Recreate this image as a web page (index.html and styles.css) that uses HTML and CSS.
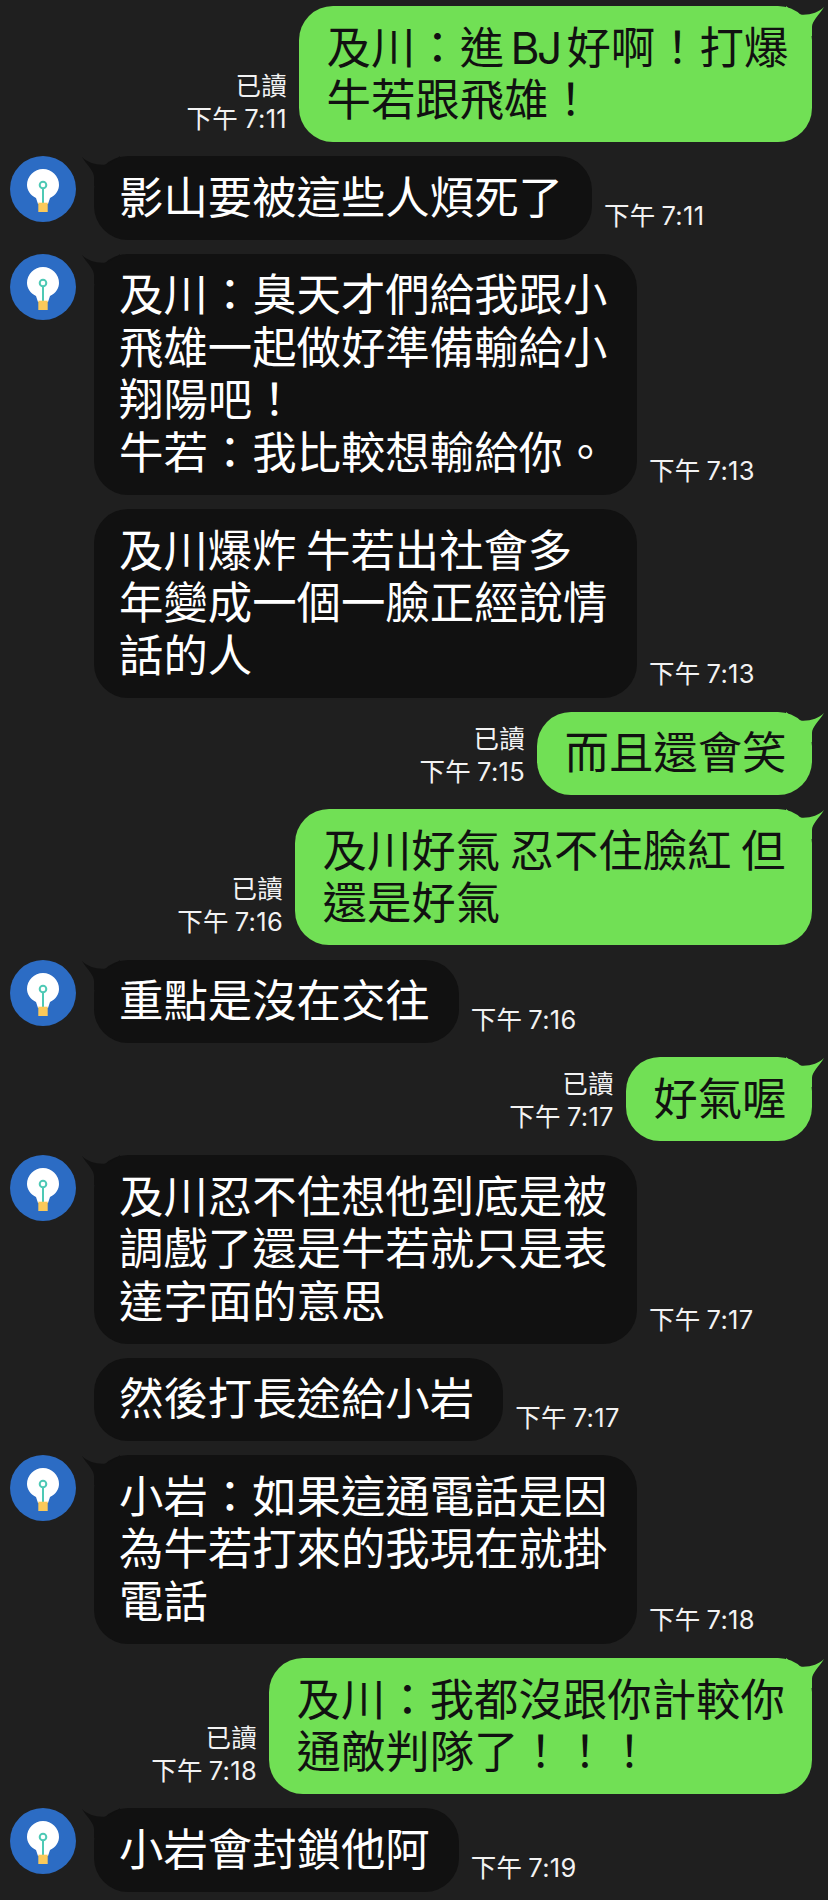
FILE: index.html
```html
<!DOCTYPE html>
<html lang="zh-Hant">
<head>
    <meta charset="UTF-8">
    <title>聊天記錄</title>
    <meta name="viewport" content="width=device-width, initial-scale=1.0">
    <link rel="stylesheet" href="styles.css">
</head>
<body>

<svg class="defs" width="0" height="0" aria-hidden="true">
    <symbol id="avatar" viewBox="0 0 66 66">
        <circle cx="33" cy="33" r="33" fill="#2c6cc4"/>
        <path d="M26 42C20 39 17 34 17 29a16 16 0 0 1 32 0C49 34 46 39 40 42L38 48H28Z" fill="#fff"/>
        <rect x="32" y="32" width="2" height="16" fill="#4ec9b5"/>
        <circle cx="33" cy="29" r="3.3" fill="#fff" stroke="#4ec9b5" stroke-width="2"/>
        <rect x="28.3" y="46.7" width="9.4" height="9.3" fill="#fbc95a"/>
    </symbol>
    <symbol id="tail" viewBox="0 0 40 30">
        <path d="M0 1C5 6 13 9 22 8.7C28 8 33 4 38 0V30H12V21C12 15 5 9 0 1Z"/>
    </symbol>
</svg>

<div class="chat">

    <div class="row me">
        <div class="meta"><span>已讀</span><span>下午 7:11</span></div>
        <div class="bubble w513"><svg class="tail"><use href="#tail"/></svg>及川：進<span class="bj"> BJ </span>好啊！打爆<br>牛若跟飛雄！</div>
    </div>

    <div class="row">
        <svg class="avatar"><use href="#avatar"/></svg>
        <div class="bubble"><svg class="tail"><use href="#tail"/></svg>影山要被這些人煩死了</div>
        <div class="meta"><span>下午 7:11</span></div>
    </div>

    <div class="row">
        <svg class="avatar"><use href="#avatar"/></svg>
        <div class="bubble wide"><svg class="tail"><use href="#tail"/></svg>及川：臭天才們給我跟小<br>飛雄一起做好準備輸給小<br>翔陽吧！<br>牛若：我比較想輸給你。</div>
        <div class="meta"><span>下午 7:13</span></div>
    </div>

    <div class="row next">
        <div class="bubble wide">及川爆炸 牛若出社會多<br>年變成一個一臉正經說情<br>話的人</div>
        <div class="meta"><span>下午 7:13</span></div>
    </div>

    <div class="row me">
        <div class="meta"><span>已讀</span><span>下午 7:15</span></div>
        <div class="bubble"><svg class="tail"><use href="#tail"/></svg>而且還會笑</div>
    </div>

    <div class="row me">
        <div class="meta"><span>已讀</span><span>下午 7:16</span></div>
        <div class="bubble w517"><svg class="tail"><use href="#tail"/></svg>及川好氣 忍不住臉紅 但<br>還是好氣</div>
    </div>

    <div class="row">
        <svg class="avatar"><use href="#avatar"/></svg>
        <div class="bubble"><svg class="tail"><use href="#tail"/></svg>重點是沒在交往</div>
        <div class="meta"><span>下午 7:16</span></div>
    </div>

    <div class="row me">
        <div class="meta"><span>已讀</span><span>下午 7:17</span></div>
        <div class="bubble"><svg class="tail"><use href="#tail"/></svg>好氣喔</div>
    </div>

    <div class="row">
        <svg class="avatar"><use href="#avatar"/></svg>
        <div class="bubble wide"><svg class="tail"><use href="#tail"/></svg>及川忍不住想他到底是被<br>調戲了還是牛若就只是表<br>達字面的意思</div>
        <div class="meta"><span>下午 7:17</span></div>
    </div>

    <div class="row next">
        <div class="bubble">然後打長途給小岩</div>
        <div class="meta"><span>下午 7:17</span></div>
    </div>

    <div class="row">
        <svg class="avatar"><use href="#avatar"/></svg>
        <div class="bubble wide"><svg class="tail"><use href="#tail"/></svg>小岩：如果這通電話是因<br>為牛若打來的我現在就掛<br>電話</div>
        <div class="meta"><span>下午 7:18</span></div>
    </div>

    <div class="row me">
        <div class="meta"><span>已讀</span><span>下午 7:18</span></div>
        <div class="bubble wide"><svg class="tail"><use href="#tail"/></svg>及川：我都沒跟你計較你<br>通敵判隊了！！！</div>
    </div>

    <div class="row">
        <svg class="avatar"><use href="#avatar"/></svg>
        <div class="bubble"><svg class="tail"><use href="#tail"/></svg>小岩會封鎖他阿</div>
        <div class="meta"><span>下午 7:19</span></div>
    </div>

</div>

</body>
</html>
```

FILE: styles.css
```css
body {
    margin: 0;
    background-color: #1f1f1f;
    font-family: Inter, "Noto Sans CJK TC", sans-serif;
    color: #fff;
}
.defs {
    position: absolute;
}
.chat {
    display: flex;
    flex-direction: column;
    gap: 14.2px;
    padding: 6px 16px 7px 10px;
}
.row {
    display: flex;
    align-items: flex-end;
}
.row.me {
    justify-content: flex-end;
}
.row.next {
    padding-left: 84px;
}
.avatar {
    align-self: flex-start;
    width: 66px;
    height: 66px;
    margin-right: 18px;
    flex-shrink: 0;
}
.bubble {
    position: relative;
    box-sizing: border-box;
    padding: 15.5px 29px 15.5px 25px;
    border-radius: 34px;
    background: #111;
    font-size: 44.4px;
    line-height: 52.5px;
    word-spacing: -3px;
    white-space: nowrap;
}
.wide {
    width: 543px;
}
.w513 {
    width: 513px;
}
.w517 {
    width: 517px;
}
.bj {
    letter-spacing: -2.5px;
    word-spacing: -3.5px;
}
.tail {
    position: absolute;
    top: 0;
    left: -12px;
    width: 40px;
    height: 30px;
    fill: #111;
}
.meta {
    display: flex;
    flex-direction: column;
    margin: 0 0 7.5px 12px;
    font-size: 25.5px;
    line-height: 33px;
    letter-spacing: 0.3px;
    word-spacing: -1.5px;
    color: #f2f2f2;
    white-space: nowrap;
}
.me .meta {
    align-items: flex-end;
    margin: 0 12px 7.5px 0;
}
.me .bubble {
    background: #71e055;
    color: #111;
    padding: 15.5px 25.5px 15.5px 27.5px;
}
.me .tail {
    left: auto;
    right: -12px;
    transform: scaleX(-1);
    fill: #71e055;
}
```
